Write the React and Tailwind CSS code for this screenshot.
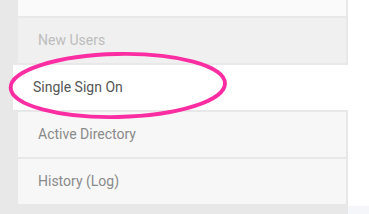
import React from "react";

// ─── Sidebar row ─────────────────────────────────────────────────────────────

function Row({ label, tone = "normal" }) {
  if (tone === "active") {
    return (
      <div className="relative z-10 -ml-[5px] -mr-[23px] flex h-[45px] items-center bg-white pl-5 text-[14px] text-[#555555]">
        {label}
      </div>
    );
  }
  return (
    <div
      className={`flex h-[45px] items-center pl-5 text-[14px] ${
        tone === "muted" ? "bg-[#f0f0f0] text-[#bdbdbd]" : "bg-[#f7f7f7] text-[#8a8a8a]"
      }`}
    >
      {label}
    </div>
  );
}

export default function App() {
  return (
    <div
      className="relative flex h-[214px] w-[369px] overflow-hidden bg-white"
      style={{ fontFamily: "Roboto, 'Liberation Sans', sans-serif" }}
    >
      {/* Sidebar column */}
      <div className="flex w-[348px] shrink-0 flex-col gap-[2px] bg-[#e8e8e8] pl-[18px] pr-[2px]">
        <div className="h-[16px] bg-[#fafafa]" />
        <Row label="New Users" tone="muted" />
        <Row label="Single Sign On" tone="active" />
        <Row label="Active Directory" />
        <Row label="History (Log)" />
      </div>

      {/* Content edge */}
      <div className="flex flex-1 flex-col">
        <div className="h-[206px]" />
        <div className="flex-1 bg-[#f4f6f9]" />
      </div>

      {/* Highlight annotation */}
      <svg
        className="pointer-events-none absolute left-0 top-0 z-20"
        width="369"
        height="214"
        viewBox="0 0 369 214"
      >
        <ellipse
          cx="117.8"
          cy="85.5"
          rx="107.2"
          ry="31.5"
          transform="rotate(-1.2 117.8 85.5)"
          fill="none"
          stroke="#fa2ea2"
          strokeWidth="3.8"
        />
      </svg>
    </div>
  );
}
